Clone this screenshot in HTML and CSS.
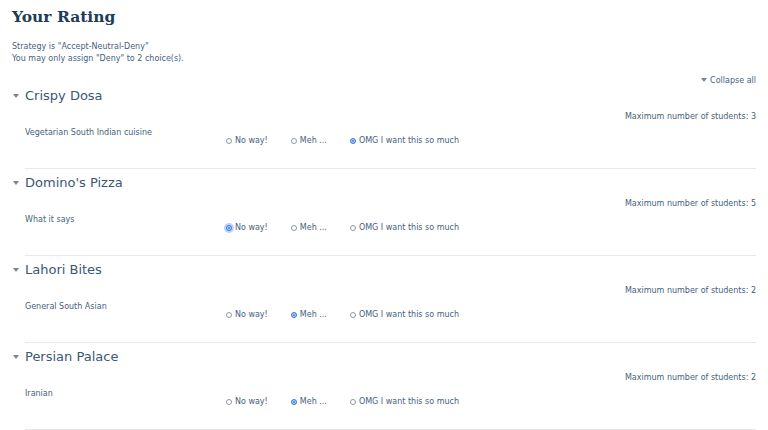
FILE: index.html
```html
<!DOCTYPE html>
<html>
<head>
<meta charset="utf-8">
<link rel="stylesheet" href="styles.css">
</head>
<body>
<h1 class="title">Your Rating</h1>
<div class="strategy">
  <div>Strategy is "Accept-Neutral-Deny"</div>
  <div>You may only assign "Deny" to 2 choice(s).</div>
</div>
<div class="collapse-all"><span class="caret-small"></span>Collapse all</div>

<section class="choice">
  <div class="choice-head"><span class="caret"></span><h3>Crispy Dosa</h3></div>
  <div class="choice-body">
    <div class="max">Maximum number of students: 3</div>
    <div class="row">
      <div class="desc">Vegetarian South Indian cuisine</div>
      <div class="options">
        <label class="opt"><input type="radio" name="c1">No way!</label>
        <label class="opt"><input type="radio" name="c1">Meh ...</label>
        <label class="opt"><input type="radio" name="c1" checked>OMG I want this so much</label>
      </div>
    </div>
  </div>
</section>

<section class="choice">
  <div class="choice-head"><span class="caret"></span><h3>Domino's Pizza</h3></div>
  <div class="choice-body">
    <div class="max">Maximum number of students: 5</div>
    <div class="row">
      <div class="desc">What it says</div>
      <div class="options">
        <label class="opt"><input type="radio" name="c2" class="focused" checked>No way!</label>
        <label class="opt"><input type="radio" name="c2">Meh ...</label>
        <label class="opt"><input type="radio" name="c2">OMG I want this so much</label>
      </div>
    </div>
  </div>
</section>

<section class="choice">
  <div class="choice-head"><span class="caret"></span><h3>Lahori Bites</h3></div>
  <div class="choice-body">
    <div class="max">Maximum number of students: 2</div>
    <div class="row">
      <div class="desc">General South Asian</div>
      <div class="options">
        <label class="opt"><input type="radio" name="c3">No way!</label>
        <label class="opt"><input type="radio" name="c3" checked>Meh ...</label>
        <label class="opt"><input type="radio" name="c3">OMG I want this so much</label>
      </div>
    </div>
  </div>
</section>

<section class="choice">
  <div class="choice-head"><span class="caret"></span><h3>Persian Palace</h3></div>
  <div class="choice-body">
    <div class="max">Maximum number of students: 2</div>
    <div class="row">
      <div class="desc">Iranian</div>
      <div class="options">
        <label class="opt"><input type="radio" name="c4">No way!</label>
        <label class="opt"><input type="radio" name="c4" checked>Meh ...</label>
        <label class="opt"><input type="radio" name="c4">OMG I want this so much</label>
      </div>
    </div>
  </div>
</section>
</body>
</html>
```

FILE: styles.css
```css
html, body {
  margin: 0;
  padding: 0;
  background: #ffffff;
}
body {
  padding: 0 12px;
  font-family: "DejaVu Sans", "Noto Sans", sans-serif;
  color: #45617d;
  overflow: hidden;
}
.title {
  margin: 6px 0 0 0;
  font-family: "DejaVu Serif", "Liberation Serif", serif;
  font-weight: bold;
  font-size: 15.5px;
  line-height: 22px;
  color: #1e3b5a;
}
.strategy {
  margin-top: 13px;
  font-size: 8px;
  line-height: 12px;
  color: #45617d;
}
.collapse-all {
  margin-top: 11px;
  text-align: right;
  font-size: 8px;
  line-height: 10px;
  color: #45617d;
}
.caret-small {
  display: inline-block;
  width: 0;
  height: 0;
  border-left: 3px solid transparent;
  border-right: 3px solid transparent;
  border-top: 4px solid #7a8694;
  margin-right: 3px;
  vertical-align: 1px;
}
.choice {
  margin-top: 4px;
}
.choice:first-of-type {
  margin-top: 0;
}
.choice-head {
  display: flex;
  align-items: center;
  height: 20px;
}
.caret {
  width: 0;
  height: 0;
  border-left: 3.5px solid transparent;
  border-right: 3.5px solid transparent;
  border-top: 4px solid #7a8694;
  margin-left: 1px;
  margin-right: 6px;
}
.choice-head h3 {
  margin: 0;
  font-weight: normal;
  font-size: 13px;
  line-height: 20px;
  color: #3a5775;
}
.choice-body {
  margin-left: 13px;
  padding-bottom: 22px;
  border-bottom: 1px solid #e8e8ea;
}
.max {
  margin-top: 6px;
  text-align: right;
  font-size: 8px;
  line-height: 10px;
}
.row {
  display: flex;
}
.desc {
  width: 201px;
  margin-top: 6px;
  font-size: 8px;
  line-height: 10px;
}
.options {
  display: flex;
  gap: 23px;
  margin-top: 14px;
  font-size: 8px;
  line-height: 10px;
}
.opt {
  display: flex;
  align-items: center;
}
.opt input {
  appearance: none;
  -webkit-appearance: none;
  width: 6px;
  height: 6px;
  margin: 0 3px 0 0;
  border: 1px solid #8d99a6;
  border-radius: 50%;
  background: #fff;
  box-sizing: border-box;
}
.opt input:checked {
  border: 1px solid #3f80e0;
  background: #3f80e0;
  box-shadow: inset 0 0 0 1px #cfe0fa;
}
.opt input.focused {
  box-shadow: inset 0 0 0 1px #cfe0fa, 0 0 0 2px #b8d3f7;
}
```
